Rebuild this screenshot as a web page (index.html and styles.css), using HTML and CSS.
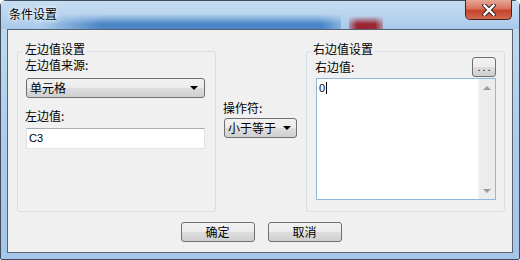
FILE: index.html
```html
<!DOCTYPE html>
<html>
<head>
  <meta charset="UTF-8">
  <title>条件设置</title>
  <link rel="stylesheet" href="styles.css">
</head>
<body>
  <div class="window">
    <div class="titlebar">
      <span class="title">条件设置</span>
      <div class="close">
        <svg width="14" height="12" viewBox="0 0 14 12">
          <path d="M2.5 1.5 L11.5 10.5 M11.5 1.5 L2.5 10.5" stroke="#3b2525" stroke-width="4.4" stroke-linecap="square"/>
          <path d="M2.5 1.5 L11.5 10.5 M11.5 1.5 L2.5 10.5" stroke="#fff" stroke-width="2.4" stroke-linecap="square"/>
        </svg>
      </div>
    </div>

    <div class="client">
      <div class="panels">
        <div class="group left">
          <div class="group-title">左边值设置</div>
          <div class="label first">左边值来源:</div>
          <div class="combo wide"><span>单元格</span><i class="arrow"></i></div>
          <div class="label second">左边值:</div>
          <div class="textbox">C3</div>
        </div>

        <div class="operator">
          <div class="label">操作符:</div>
          <div class="combo small"><span>小于等于</span><i class="arrow"></i></div>
        </div>

        <div class="group right">
          <div class="group-title">右边值设置</div>
          <div class="label-row">
            <span class="label">右边值:</span>
            <div class="dots">...</div>
          </div>
          <div class="memo">
            <div class="memo-text">0<span class="caret"></span></div>
            <div class="scrollbar">
              <div class="sb-btn"><i class="up"></i></div>
              <div class="sb-btn"><i class="down"></i></div>
            </div>
          </div>
        </div>
      </div>

      <div class="actions">
        <div class="btn">确定</div>
        <div class="btn">取消</div>
      </div>
    </div>
  </div>
</body>
</html>
```

FILE: styles.css
```css
/* Reset styles */
* {
  margin: 0;
  padding: 0;
  box-sizing: border-box;
}

body {
  font-family: "Liberation Sans", "Noto Sans CJK SC", sans-serif;
  font-size: 12px;
  line-height: 14px;
  color: #000;
  background: #fff;
}

/* Window frame */
.window {
  width: 520px;
  height: 260px;
  border: 1px solid #3f4d5e;
  border-radius: 6px 6px 2px 2px;
  padding: 0 6px 6px;
  background: linear-gradient(to bottom, #c3dbf1 0%, #aacbea 60%, #a4c6e8 100%);
}

/* glass title bar, with the blurred windows behind it */
.titlebar {
  height: 28px;
  display: flex;
  justify-content: space-between;
  align-items: flex-start;
  margin: 0 -6px;
  padding: 0 7px 0 7px;
  background:
    linear-gradient(to bottom, #b9d4ee, rgba(185, 212, 238, 0)) 40px 13px / 300px 10px no-repeat,
    linear-gradient(to right, rgba(70, 130, 196, 0), #4a86c6 60px, #4886c8 280px, rgba(72, 134, 200, 0.4)) 40px 13px / 300px 15px no-repeat,
    linear-gradient(to bottom, #b9d4ee, rgba(185, 212, 238, 0)) 348px 15px / 34px 8px no-repeat,
    linear-gradient(to right, rgba(150, 35, 45, 0.3), #9b2530 8px, #9b2530 26px, rgba(150, 35, 45, 0.3)) 348px 15px / 34px 13px no-repeat,
    linear-gradient(to bottom, #c6ddf2 0%, #b7d3ee 55%, #a9c9ea 100%);
}

.title {
  padding: 6px 0 0 1px;
  font-family: "Noto Sans CJK SC", sans-serif;
  text-shadow: 0 0 6px #fff, 0 0 3px #fff;
}

.close {
  width: 47px;
  height: 20px;
  margin-top: -1px;
  border: 1px solid #4a2220;
  border-top: none;
  border-radius: 0 0 5px 5px;
  background: linear-gradient(to bottom, #e8a898 0%, #d8735e 45%, #c7442b 55%, #d06a4f 100%);
  display: flex;
  align-items: center;
  justify-content: center;
}

/* Client area */
.client {
  height: 224px;
  border: 1px solid #56626f;
  background: #f0f0f0;
  padding: 21px 7px 0 9px;
}

.panels {
  display: flex;
}

.group {
  width: 199px;
  height: 161px;
  border: 1px solid #d5dfe5;
  border-radius: 3px;
  display: flex;
  flex-direction: column;
  align-items: flex-start;
}

.group.left {
  padding: 0 10px 0 8px;
}

.group.right {
  padding: 0 8px 0 9px;
}

.group-title {
  margin-top: -10px;
  margin-left: -3px;
  padding: 0 2px;
  background: #f0f0f0;
  font-family: "Noto Sans CJK SC", sans-serif;
}

.group.right .group-title {
  margin-left: -5px;
}

.label {
  font-family: "Noto Sans CJK SC", sans-serif;
  margin-left: -1px;
}

.label.first {
  margin-top: 2px;
}

.label.second {
  margin-top: 11px;
}

/* Combo boxes and buttons */
.combo,
.btn,
.dots {
  border: 1px solid #707070;
  border-radius: 3px;
  background: linear-gradient(to bottom, #f2f2f2 0%, #ebebeb 48%, #dddddd 52%, #cfcfcf 100%);
}

.combo {
  height: 20px;
  display: flex;
  align-items: center;
  justify-content: space-between;
  padding: 0 6px 0 3px;
  font-family: "Noto Sans CJK SC", sans-serif;
}

.combo.wide {
  width: 100%;
  margin-top: 6px;
}

.combo.small {
  width: 73px;
  margin-top: 3px;
  padding-right: 5px;
}

.arrow {
  width: 0;
  height: 0;
  border-left: 4px solid transparent;
  border-right: 4px solid transparent;
  border-top: 4px solid #000;
}

.textbox {
  width: 100%;
  height: 21px;
  margin-top: 5px;
  border: 1px solid #e2e3ea;
  border-top-color: #abadb3;
  background: #fff;
  padding: 3px 0 0 2px;
  font-size: 11px;
  line-height: 13px;
}

.operator {
  flex: 1;
  padding: 50px 0 0 8px;
}

.label-row {
  width: 100%;
  height: 20px;
  margin-top: 1px;
  display: flex;
  justify-content: space-between;
  align-items: center;
}

.dots {
  width: 24px;
  height: 20px;
  font-size: 11px;
  line-height: 18px;
  letter-spacing: 2px;
  text-align: center;
  padding-left: 2px;
}

/* Multi-line value box */
.memo {
  width: 100%;
  height: 122px;
  margin-top: 1px;
  border: 1px solid #8fb6de;
  background: #fff;
  display: flex;
}

.memo-text {
  flex: 1;
  padding: 3px 0 0 2px;
  font-size: 11px;
  line-height: 13px;
}

.caret {
  display: inline-block;
  width: 1px;
  height: 12px;
  background: #000;
  vertical-align: -2px;
  margin-left: 1px;
}

.scrollbar {
  width: 17px;
  background: #ececec;
  border-left: 1px solid #f4f4f4;
  display: flex;
  flex-direction: column;
  justify-content: space-between;
}

.sb-btn {
  height: 17px;
  display: flex;
  align-items: center;
  justify-content: center;
}

.up,
.down {
  width: 0;
  height: 0;
  border-left: 4px solid transparent;
  border-right: 4px solid transparent;
}

.up {
  border-bottom: 4px solid #9a9a9a;
}

.down {
  border-top: 4px solid #9a9a9a;
}

/* Dialog buttons */
.actions {
  margin-top: 10px;
  display: flex;
  justify-content: center;
  gap: 13px;
}

.btn {
  width: 74px;
  height: 20px;
  font-family: "Noto Sans CJK SC", sans-serif;
  line-height: 18px;
  text-align: center;
}
```
